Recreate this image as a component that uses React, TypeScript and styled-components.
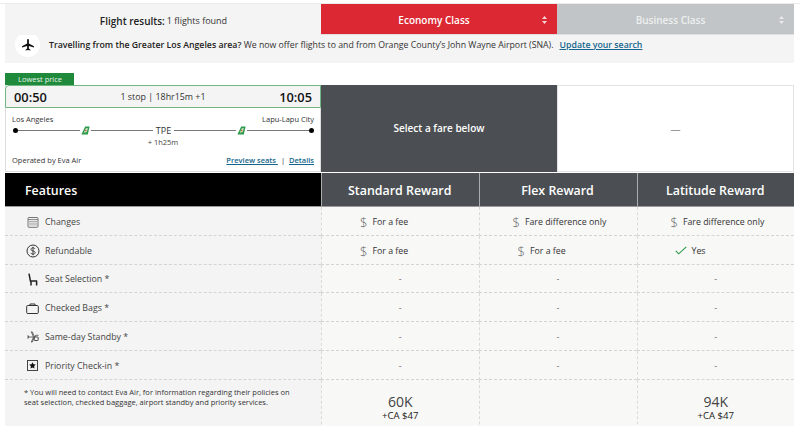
import React from "react";
import styled, { createGlobalStyle } from "styled-components";

const Global = createGlobalStyle`
  html, body { margin: 0; padding: 0; background: #fff; overflow: hidden; }
  body { font-family: "Open Sans", "Liberation Sans", sans-serif; color: #333; }
  * { box-sizing: border-box; }
`;

const Page = styled.div`
  height: 426px;
  overflow: hidden;
  padding-top: 3px;
`;
const Frame = styled.div`
  border-top: 1px solid #ececec;
  padding: 0 6px 0 5px;
`;
const ClassRow = styled.div`
  display: grid;
  grid-template-columns: 316px 236px 237px;
  height: 31px;
`;
const Results = styled.div`
  background: #f4f4f4;
  display: flex;
  align-items: center;
  justify-content: center;
  gap: 2px;
  font-size: 9px;
  color: #333;
  padding-left: 1px;
  padding-top: 2px;
  strong { font-size: 10px; font-weight: 600; color: #222; }
`;
const ClassTab = styled.div<{ $active?: boolean }>`
  position: relative;
  display: flex;
  align-items: center;
  justify-content: center;
  background: ${(p) => (p.$active ? "#dc2832" : "#c1c5c7")};
  color: ${(p) => (p.$active ? "#fff" : "#eef0f0")};
  font-size: 10px;
  font-weight: 600;
  padding: 2px 10px 0 0;
  border-bottom: 1px solid #e0e0e0;
`;
const Sort = styled.svg`
  position: absolute;
  right: 10px;
  top: 12px;
`;
const Notice = styled.div`
  display: flex;
  align-items: center;
  height: 28px;
  padding: 0 0 9px 44px;
  background: #f4f4f4;
  position: relative;
  overflow: hidden;
  font-size: 8.75px;
  color: #333;
  white-space: pre;
  strong { font-weight: 600; color: #222; }
`;
const PlaneBadge = styled.div`
  position: absolute;
  left: 10px;
  top: -3px;
  width: 25px;
  height: 25px;
  border-radius: 50%;
  background: #fff;
  display: flex;
  align-items: center;
  justify-content: center;
`;
const Link = styled.a`
  color: #14668c;
  font-weight: 600;
  text-decoration: underline;
`;
const UpdateLink = styled(Link)`
  margin-left: 6px;
`;
const LowestTab = styled.div`
  margin-top: 10px;
  width: 69px;
  height: 12px;
  background: #1f8a3c;
  color: #e6f3e9;
  font-size: 7.5px;
  line-height: 12px;
  padding-left: 13px;
`;
const FlightRow = styled.div`
  display: grid;
  grid-template-columns: 316px 236px 237px;
  height: 87px;
`;
const FlightCard = styled.div`
  border: 1px solid #dedede;
  border-top: 0;
  display: flex;
  flex-direction: column;
  background: #fff;
`;
const Times = styled.div`
  margin: 0 -1px;
  height: 23px;
  border: 1px solid #72b684;
  border-top-left-radius: 4px;
  background: #f4f4f4;
  display: grid;
  grid-template-columns: 1fr auto 1fr;
  align-items: center;
  padding: 0 8px;
  font-size: 8.9px;
  color: #333;
`;
const Time = styled.span<{ $end?: boolean }>`
  font-size: 12.8px;
  font-weight: 600;
  color: #111;
  text-align: ${(p) => (p.$end ? "right" : "left")};
`;
const Cities = styled.div`
  display: flex;
  justify-content: space-between;
  padding: 6px 6px 0;
  font-size: 7.5px;
  line-height: 11px;
  color: #333;
`;
const Route = styled.div`
  display: flex;
  align-items: center;
  height: 11px;
  padding: 0 6px 0 7px;
  font-size: 9px;
  color: #333;
`;
const Dot = styled.span`
  width: 5px;
  height: 5px;
  border-radius: 50%;
  background: #000;
  flex: none;
`;
const Line = styled.span`
  flex: 1;
  height: 1px;
  background: #777;
`;
const Tail = styled.svg`
  flex: none;
  margin: 0 1px;
`;
const Stop = styled.span`
  padding: 0 3px;
`;
const Layover = styled.div`
  text-align: center;
  font-size: 7.5px;
  line-height: 11px;
  margin-top: 1px;
  color: #444;
`;
const CardFoot = styled.div`
  display: flex;
  justify-content: space-between;
  padding: 7px 6px 0;
  font-size: 7.5px;
  line-height: 11px;
  color: #333;
`;
const Sep = styled.span`
  margin: 0 4px 0 3px;
`;
const SelectPanel = styled.div`
  background: #4b4f53;
  color: #fff;
  display: flex;
  align-items: center;
  justify-content: center;
  font-size: 10px;
  font-weight: 600;
  padding-bottom: 1px;
`;
const EmptyPanel = styled.div`
  border: 1px solid #e2e2e2;
  display: flex;
  align-items: center;
  justify-content: center;
  color: #999;
  font-size: 10px;
`;
const Table = styled.div`
  margin-top: 1px;
  display: grid;
  grid-template-columns: 316px 157.5px 158px 157.5px;
`;
const HeadCell = styled.div<{ $black?: boolean }>`
  height: 34px;
  display: flex;
  align-items: center;
  justify-content: ${(p) => (p.$black ? "flex-start" : "center")};
  padding: ${(p) => (p.$black ? "2px 0 0 20px" : "2px 1px 0 0")};
  background: ${(p) => (p.$black ? "#000" : "#4b4f53")};
  border-left: ${(p) => (p.$black ? "0" : "1px solid #a9adb0")};
  border-bottom: 1px solid #9a9a9a;
  color: #fff;
  font-size: 12.4px;
  font-weight: 600;
`;
const FeatureCell = styled.div`
  height: 28.8px;
  background: #f4f4f4;
  border-bottom: 1px dashed #d4d4d4;
  display: flex;
  align-items: center;
  padding: 2px 0 0 20px;
  font-size: 8.8px;
  color: #444;
`;
const IconSlot = styled.span`
  width: 15px;
  margin-right: 5px;
  display: flex;
  justify-content: center;
  color: #333;
`;
const ValueCell = styled.div<{ $inset?: number }>`
  height: 28.8px;
  background: #f8f8f7;
  border-left: 1px dashed #dadada;
  border-bottom: 1px dashed #d4d4d4;
  display: flex;
  align-items: center;
  justify-content: ${(p) => (p.$inset ? "flex-start" : "center")};
  padding: 2px 0 0 ${(p) => p.$inset ?? 0}px;
  gap: 5px;
  font-size: 8.8px;
  color: #333;
`;
const Dollar = styled.span`
  font-size: 13px;
  color: #666;
  font-weight: 300;
`;
const Dash = styled.span`
  color: #666;
`;
const Note = styled.div`
  height: 60px;
  background: #f4f4f4;
  padding: 7px 20px 0 19px;
  font-size: 7.5px;
  line-height: 10px;
  color: #333;
`;
const PriceCell = styled.div`
  height: 60px;
  background: #f8f8f7;
  border-left: 1px dashed #dadada;
  display: flex;
  flex-direction: column;
  align-items: center;
  padding-top: 15px;
`;
const Points = styled.div`
  font-size: 14px;
  line-height: 14px;
  color: #444;
`;
const Cash = styled.div`
  margin-top: 1px;
  font-size: 9.6px;
  line-height: 11px;
  color: #222;
`;

const SortIcon = ({ color }: { color: string }) => (
  <Sort width="5" height="8" viewBox="0 0 5 8" fill={color}>
    <path d="M2.500 0 5 3H0zM2.500 8 0 5h5z" />
  </Sort>
);
const TailIcon = () => (
  <Tail width="9" height="9" viewBox="0 0 9 9">
    <path d="M4.200.6h4.400L6.800 8.400H.4z" fill="#2b9a4a" />
    <path d="M4.800 2.600 6.800 2 5.800 6 2.800 6.800z" fill="#e4ecd8" />
    <circle cx="4.800" cy="4.600" r=".9" fill="#c96a3c" />
  </Tail>
);
const icons: Record<string, React.ReactNode> = {
  cal: (
    <svg width="12" height="12" viewBox="0 0 12 12" fill="none" stroke="#666" strokeWidth=".9">
      <rect x="1" y="1.500" width="10" height="9.800" rx="1" />
      <path d="M1 3.600h10" strokeWidth=".8" />
      <path d="M3 5v4.800M5 5v4.800M7 5v4.800M9 5v4.800" strokeWidth="1" strokeDasharray="1 .7" />
    </svg>
  ),
  dollar: (
    <svg width="14" height="14" viewBox="0 0 14 14" fill="none" stroke="#333">
      <circle cx="7" cy="7" r="6" strokeWidth="1" />
      <path d="M9 5c-.4-.9-1.200-1.200-2-1.200-1.200 0-2 .6-2 1.600 0 2.300 4.200 1 4.200 3.200 0 1-1 1.600-2.200 1.600-1 0-1.800-.4-2.200-1.300M7 2.800v8.400" strokeWidth=".9" />
    </svg>
  ),
  seat: (
    <svg width="10" height="13" viewBox="0 0 10 13" fill="none" stroke="#222" strokeWidth="1.500">
      <path d="M1 .6 2.400 8h6.800M3 8.200V12.500M8.600 8.200V12.500" />
    </svg>
  ),
  bag: (
    <svg width="13" height="11" viewBox="0 0 13 11" fill="none" stroke="#333" strokeWidth="1">
      <rect x=".7" y="2.500" width="11.600" height="8" rx="1" />
      <path d="M4 2.500V1h5v1.500" />
    </svg>
  ),
  standby: (
    <svg width="12" height="12" viewBox="0 0 12 12" fill="#444" stroke="#333" strokeWidth=".7">
      <path d="M0 6h6.500L4.300.8l1 .1L7.500 6 5.300 11l-1 .1L6.500 6" fill="none" />
      <path d="M.8 4.200 1.800 6l-1 1.800" fill="none" />
      <rect x="7.200" y="6" width="4" height="3.500" rx=".6" fill="none" strokeWidth=".9" />
      <path d="M8 6 8.600 4.300h3" fill="none" />
    </svg>
  ),
  star: (
    <svg width="11" height="11" viewBox="0 0 11 11">
      <rect x=".5" y=".5" width="10" height="10" fill="none" stroke="#444" />
      <path d="m5.500 2.200 1 2.100 2.300.3-1.700 1.600.4 2.300-2-1.100-2 1.100.4-2.300L2.200 4.600l2.300-.3z" fill="#111" />
    </svg>
  ),
};

const fee = (
  <>
    <Dollar>$</Dollar>For a fee
  </>
);
const diff = (
  <>
    <Dollar>$</Dollar>Fare difference only
  </>
);
const yes = (
  <>
    <svg width="12" height="9" viewBox="0 0 12 9" fill="none" stroke="#2b9a4a" strokeWidth="1.100">
      <path d="m.7 4.800 3 3L11.300.8" />
    </svg>
    Yes
  </>
);

type Val = { node: React.ReactNode; inset?: number };
const dash: Val = { node: <Dash>-</Dash> };
const rows: { icon: string; label: string; vals: Val[] }[] = [
  {
    icon: "cal",
    label: "Changes",
    vals: [
      { node: fee, inset: 38 },
      { node: diff, inset: 33 },
      { node: diff, inset: 33 },
    ],
  },
  {
    icon: "dollar",
    label: "Refundable",
    vals: [
      { node: fee, inset: 38 },
      { node: fee, inset: 38 },
      { node: yes, inset: 37 },
    ],
  },
  { icon: "seat", label: "Seat Selection *", vals: [dash, dash, dash] },
  { icon: "bag", label: "Checked Bags *", vals: [dash, dash, dash] },
  { icon: "standby", label: "Same-day Standby *", vals: [dash, dash, dash] },
  { icon: "star", label: "Priority Check-in *", vals: [dash, dash, dash] },
];

export default function App() {
  return (
    <Page>
      <Global />
      <Frame>
        <ClassRow>
          <Results>
            <strong>Flight results:</strong> 1 flights found
          </Results>
          <ClassTab $active>
            Economy Class
            <SortIcon color="#f6d5d7" />
          </ClassTab>
          <ClassTab>
            Business Class
            <SortIcon color="#e8eaea" />
          </ClassTab>
        </ClassRow>
        <Notice>
          <PlaneBadge>
            <svg width="12" height="12" viewBox="0 0 12 12" fill="#111">
              <path d="M6 0c.5 0 .9.6.9 1.200v3.300L12 7.300v1.100L6.900 7v2.600l1.500 1.100v.8L6 11l-2.400.5v-.8l1.500-1.100V7L0 8.400V7.300l5.100-2.800V1.200C5.100.6 5.500 0 6 0z" />
            </svg>
          </PlaneBadge>
          <strong>Travelling from the Greater Los Angeles area?</strong> We now offer flights to and from Orange County’s John Wayne Airport (SNA).
          <UpdateLink>Update your search</UpdateLink>
        </Notice>
        <LowestTab>Lowest price</LowestTab>
        <FlightRow>
          <FlightCard>
            <Times>
              <Time>00:50</Time>
              <span>1 stop | 18hr15m +1</span>
              <Time $end>10:05</Time>
            </Times>
            <Cities>
              <span>Los Angeles</span>
              <span>Lapu-Lapu City</span>
            </Cities>
            <Route>
              <Dot />
              <Line />
              <TailIcon />
              <Line />
              <Stop>TPE</Stop>
              <Line />
              <TailIcon />
              <Line />
              <Dot />
            </Route>
            <Layover>+ 1h25m</Layover>
            <CardFoot>
              <span>Operated by Eva Air</span>
              <span>
                <Link>Preview seats </Link>
                <Sep>|</Sep>
                <Link>Details</Link>
              </span>
            </CardFoot>
          </FlightCard>
          <SelectPanel>Select a fare below</SelectPanel>
          <EmptyPanel>—</EmptyPanel>
        </FlightRow>
        <Table>
          <HeadCell $black>Features</HeadCell>
          <HeadCell>Standard Reward</HeadCell>
          <HeadCell>Flex Reward</HeadCell>
          <HeadCell>Latitude Reward</HeadCell>
          {rows.map((r) => (
            <React.Fragment key={r.label}>
              <FeatureCell>
                <IconSlot>{icons[r.icon]}</IconSlot>
                {r.label}
              </FeatureCell>
              {r.vals.map((v, i) => (
                <ValueCell key={i} $inset={v.inset}>
                  {v.node}
                </ValueCell>
              ))}
            </React.Fragment>
          ))}
          <Note>
            * You will need to contact Eva Air, for information regarding their policies on seat selection, checked baggage, airport standby and priority services.
          </Note>
          <PriceCell>
            <Points>60K</Points>
            <Cash>+CA $47</Cash>
          </PriceCell>
          <PriceCell />
          <PriceCell>
            <Points>94K</Points>
            <Cash>+CA $47</Cash>
          </PriceCell>
        </Table>
      </Frame>
    </Page>
  );
}
